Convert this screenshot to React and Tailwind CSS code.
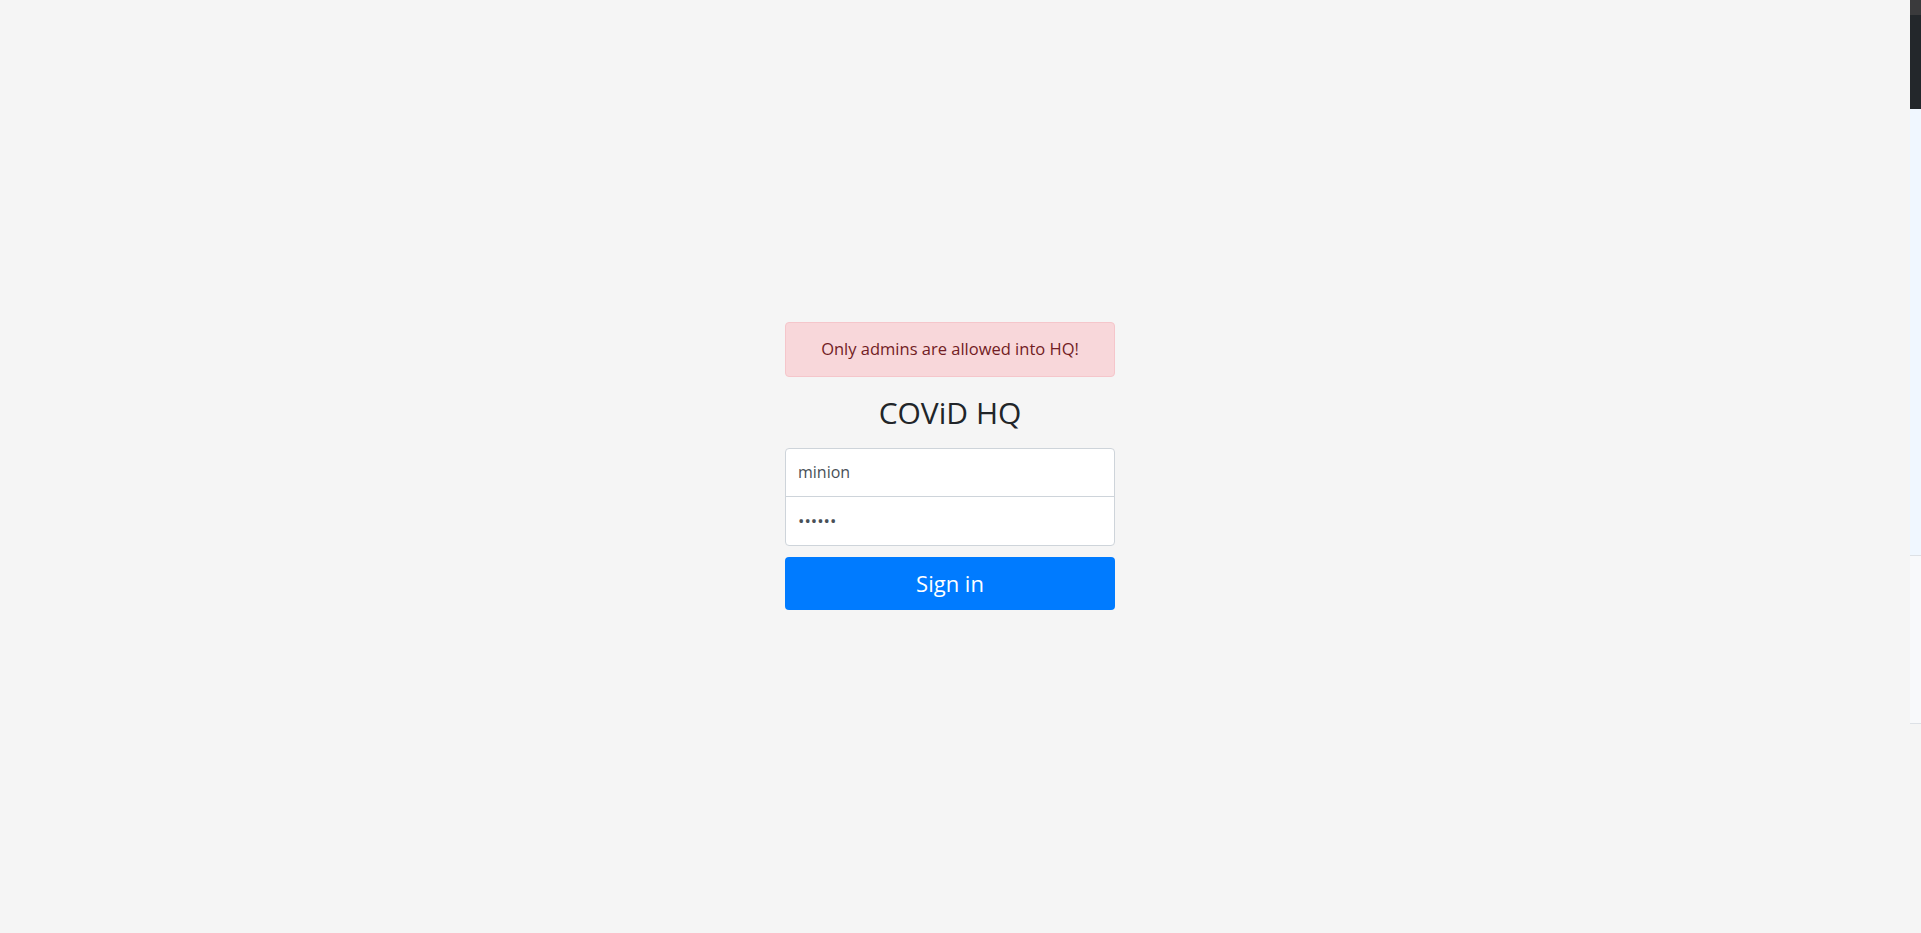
export default function App() {
  return (
    <div className="flex h-screen w-full bg-[#f5f5f5]" style={{ fontFamily: '"Open Sans", "Noto Sans", sans-serif' }}>
      {/* Sign-in page */}
      <main className="flex flex-1 items-center justify-center pb-[2px] pr-[10px]">
        <form className="w-[330px]" onSubmit={e => e.preventDefault()}>
          <div className="flex h-[55px] items-center justify-center rounded border border-[#f5c6cb] bg-[#f8d7da] text-[16.5px] text-[#721c24]">
            Only admins are allowed into HQ!
          </div>
          <h1 className="flex h-[71px] items-center justify-center text-[30px] font-normal text-[#212529]">COViD HQ</h1>
          <div className="rounded border border-[#ced4da] bg-white">
            <input
              type="text"
              readOnly
              value="minion"
              className="block h-[48px] w-full border-b border-[#ced4da] bg-transparent px-3 text-[16px] text-[#495057] outline-none"
            />
            <input
              type="password"
              readOnly
              value="secret"
              className="block h-[48px] w-full bg-transparent px-3 text-[17px] text-[#495057] outline-none"
            />
          </div>
          <button type="submit" className="mt-[11px] h-[53px] w-full rounded bg-[#007bff] text-[22px] text-white">
            Sign in
          </button>
        </form>
      </main>

      {/* Edge of the next window */}
      <div className="flex w-[11px] flex-col">
        <div className="h-[15px] bg-[#3a3a3c]" />
        <div className="h-[94px] bg-[#23272b]" />
        <div className="h-[447px] border-b border-[#dde1e6] bg-[#f0f7ff]" />
        <div className="h-[168px] border-b border-[#dde1e6] bg-[#f8f9fb]" />
        <div className="flex-1 bg-[#f5f5f5]" />
      </div>
    </div>
  );
}
